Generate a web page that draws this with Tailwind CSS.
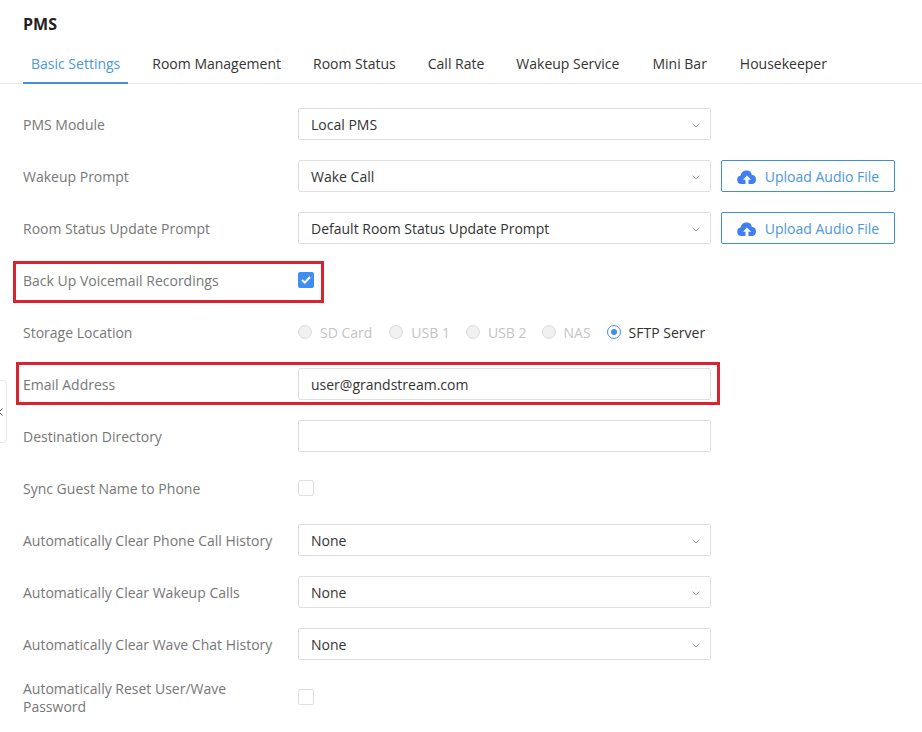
<!DOCTYPE html>
<html lang="en">
<head>
  <meta charset="UTF-8" />
  <title>PMS</title>
  <script src="https://cdn.jsdelivr.net/npm/@tailwindcss/browser@4"></script>
</head>
<body class="bg-white font-['Open_Sans','Noto_Sans',sans-serif] text-sm text-[#333]">
<div class="relative w-[922px] h-[732px] overflow-hidden">

  <!-- Header and tabs -->
  <h1 class="pl-[23px] pt-[14px] h-[38px] text-[16px] leading-[20px] font-bold text-[#222]">PMS</h1>
  <div class="flex h-[46px] pl-[23px] gap-[24px] border-b border-[#e8e8e8] text-[14px]">
    <div class="px-2 pt-[16px] border-b-2 border-[#4a90d9] text-[#4a97e0] h-[46px]">Basic Settings</div>
    <div class="pt-[16px]">Room Management</div>
    <div class="pt-[16px] pl-[8px]">Room Status</div>
    <div class="pt-[16px] pl-[8px]">Call Rate</div>
    <div class="pt-[16px] pl-[8px]">Wakeup Service</div>
    <div class="pt-[16px] pl-[9px]">Mini Bar</div>
    <div class="pt-[16px] pl-[9px]">Housekeeper</div>
  </div>

  <!-- Form -->
  <div class="pt-[24px] pl-[23px] flex flex-col gap-[20px]">
    <div class="flex items-center h-[32px]">
      <div class="w-[275px] pt-[2px] text-[#777]">PMS Module</div>
      <div class="w-[413px] h-[32px] border border-[#dedede] rounded-[2px] pl-[12px] pr-[10px] pt-[2px] flex items-center justify-between">
        Local PMS
        <svg class="w-[8px] h-[5px]" viewBox="0 0 8 5" fill="none" stroke="#aaa"><path d="M.5.5 4 4 7.500.5"/></svg>
      </div>
    </div>
    <div class="flex items-center h-[32px]">
      <div class="w-[275px] pt-[2px] text-[#777]">Wakeup Prompt</div>
      <div class="w-[413px] h-[32px] border border-[#dedede] rounded-[2px] pl-[12px] pr-[10px] pt-[2px] flex items-center justify-between">
        Wake Call
        <svg class="w-[8px] h-[5px]" viewBox="0 0 8 5" fill="none" stroke="#aaa"><path d="M.5.5 4 4 7.500.5"/></svg>
      </div>
      <button class="ml-[10px] w-[174px] h-[32px] pt-[2px] border border-[#3d8fd8] rounded-[2px] flex items-center justify-center gap-[8px] text-[#4a97e0]">
        <svg class="w-[20px] h-[14px]" viewBox="0 0 20 14"><path fill="#3f7ff0" fill-rule="evenodd" d="M4.500 14A4.300 4.300 0 0 1 3.600 5.500 5.500 5.500 0 0 1 9.800 0.500 5.200 5.200 0 0 1 14.800 4.800 4.700 4.700 0 0 1 15.500 14H11.500V9.800H14L10 5.500 6 9.800H8.500V14Z"/></svg>
        Upload Audio File
      </button>
    </div>
    <div class="flex items-center h-[32px]">
      <div class="w-[275px] pt-[2px] text-[#777]">Room Status Update Prompt</div>
      <div class="w-[413px] h-[32px] border border-[#dedede] rounded-[2px] pl-[12px] pr-[10px] pt-[2px] flex items-center justify-between">
        Default Room Status Update Prompt
        <svg class="w-[8px] h-[5px]" viewBox="0 0 8 5" fill="none" stroke="#aaa"><path d="M.5.5 4 4 7.500.5"/></svg>
      </div>
      <button class="ml-[10px] w-[174px] h-[32px] pt-[2px] border border-[#3d8fd8] rounded-[2px] flex items-center justify-center gap-[8px] text-[#4a97e0]">
        <svg class="w-[20px] h-[14px]" viewBox="0 0 20 14"><path fill="#3f7ff0" fill-rule="evenodd" d="M4.500 14A4.300 4.300 0 0 1 3.600 5.500 5.500 5.500 0 0 1 9.800 0.500 5.200 5.200 0 0 1 14.800 4.800 4.700 4.700 0 0 1 15.500 14H11.500V9.800H14L10 5.500 6 9.800H8.500V14Z"/></svg>
        Upload Audio File
      </button>
    </div>
    <div class="flex items-center h-[32px]">
      <div class="w-[275px] pt-[2px] text-[#777]">Back Up Voicemail Recordings</div>
      <div class="w-[16px] h-[16px] rounded-[2px] bg-[#3f8ff0] flex items-center justify-center">
        <svg class="w-[10px] h-[8px]" viewBox="0 0 10 8" fill="none" stroke="#fff" stroke-width="2"><path d="M1 4l2.800 2.600L9 1"/></svg>
      </div>
    </div>
    <div class="flex items-center h-[32px]">
      <div class="w-[275px] pt-[2px] text-[#777]">Storage Location</div>
      <div class="flex items-center text-[#c4c4c4]">
        <span class="w-[14px] h-[14px] rounded-full border border-[#dcdcdc] bg-[#f0f0f0] mr-[8px]"></span><span class="pt-[2px] mr-[17px]">SD Card</span>
        <span class="w-[14px] h-[14px] rounded-full border border-[#dcdcdc] bg-[#f0f0f0] mr-[8px]"></span><span class="pt-[2px] mr-[16px]">USB 1</span>
        <span class="w-[14px] h-[14px] rounded-full border border-[#dcdcdc] bg-[#f0f0f0] mr-[8px]"></span><span class="pt-[2px] mr-[15px]">USB 2</span>
        <span class="w-[14px] h-[14px] rounded-full border border-[#dcdcdc] bg-[#f0f0f0] mr-[8px]"></span><span class="pt-[2px] mr-[16px]">NAS</span>
        <span class="w-[14px] h-[14px] rounded-full border border-[#3f8ff0] mr-[8px] flex items-center justify-center"><span class="w-[6px] h-[6px] rounded-full bg-[#3f8ff0]"></span></span><span class="pt-[2px] text-[#333]">SFTP Server</span>
      </div>
    </div>
    <div class="flex items-center h-[32px]">
      <div class="w-[275px] pt-[2px] text-[#777]">Email Address</div>
      <div class="w-[413px] h-[32px] border border-[#dedede] rounded-[2px] pl-[12px] pt-[2px] flex items-center">user@grandstream.com</div>
    </div>
    <div class="flex items-center h-[32px]">
      <div class="w-[275px] pt-[2px] text-[#777]">Destination Directory</div>
      <div class="w-[413px] h-[32px] border border-[#dedede] rounded-[2px]"></div>
    </div>
    <div class="flex items-center h-[32px]">
      <div class="w-[275px] pt-[2px] text-[#777]">Sync Guest Name to Phone</div>
      <div class="w-[16px] h-[16px] rounded-[2px] border border-[#dedede]"></div>
    </div>
    <div class="flex items-center h-[32px]">
      <div class="w-[275px] pt-[2px] text-[#777]">Automatically Clear Phone Call History</div>
      <div class="w-[413px] h-[32px] border border-[#dedede] rounded-[2px] pl-[12px] pr-[10px] pt-[2px] flex items-center justify-between">
        None
        <svg class="w-[8px] h-[5px]" viewBox="0 0 8 5" fill="none" stroke="#aaa"><path d="M.5.5 4 4 7.500.5"/></svg>
      </div>
    </div>
    <div class="flex items-center h-[32px]">
      <div class="w-[275px] pt-[2px] text-[#777]">Automatically Clear Wakeup Calls</div>
      <div class="w-[413px] h-[32px] border border-[#dedede] rounded-[2px] pl-[12px] pr-[10px] pt-[2px] flex items-center justify-between">
        None
        <svg class="w-[8px] h-[5px]" viewBox="0 0 8 5" fill="none" stroke="#aaa"><path d="M.5.5 4 4 7.500.5"/></svg>
      </div>
    </div>
    <div class="flex items-center h-[32px]">
      <div class="w-[275px] pt-[2px] text-[#777]">Automatically Clear Wave Chat History</div>
      <div class="w-[413px] h-[32px] border border-[#dedede] rounded-[2px] pl-[12px] pr-[10px] pt-[2px] flex items-center justify-between">
        None
        <svg class="w-[8px] h-[5px]" viewBox="0 0 8 5" fill="none" stroke="#aaa"><path d="M.5.5 4 4 7.500.5"/></svg>
      </div>
    </div>
    <div class="flex items-center h-[32px]">
      <div class="w-[275px] text-[#777] leading-[18px] pr-[40px] pt-[4px]">Automatically Reset User/Wave Password</div>
      <div class="w-[16px] h-[16px] mt-[2px] rounded-[2px] border border-[#dedede]"></div>
    </div>
  </div>

  <!-- Annotation boxes -->
  <div class="absolute left-[13px] top-[261px] w-[311px] h-[42px] border-[3px] border-[#d9232e]"></div>
  <div class="absolute left-[16px] top-[362px] w-[704px] h-[43px] border-[3px] border-[#d9232e]"></div>

  <!-- Collapsed side handle -->
  <div class="absolute left-[-10px] top-[380px] w-[17px] h-[63px] border border-[#e8e8e8] rounded-[4px] flex items-center justify-end pr-[3px]">
    <svg class="w-[5px] h-[8px]" viewBox="0 0 5 8" fill="none" stroke="#555"><path d="M4.500.5 1 4l3.500 3.500"/></svg>
  </div>
</div>
</body>
</html>
